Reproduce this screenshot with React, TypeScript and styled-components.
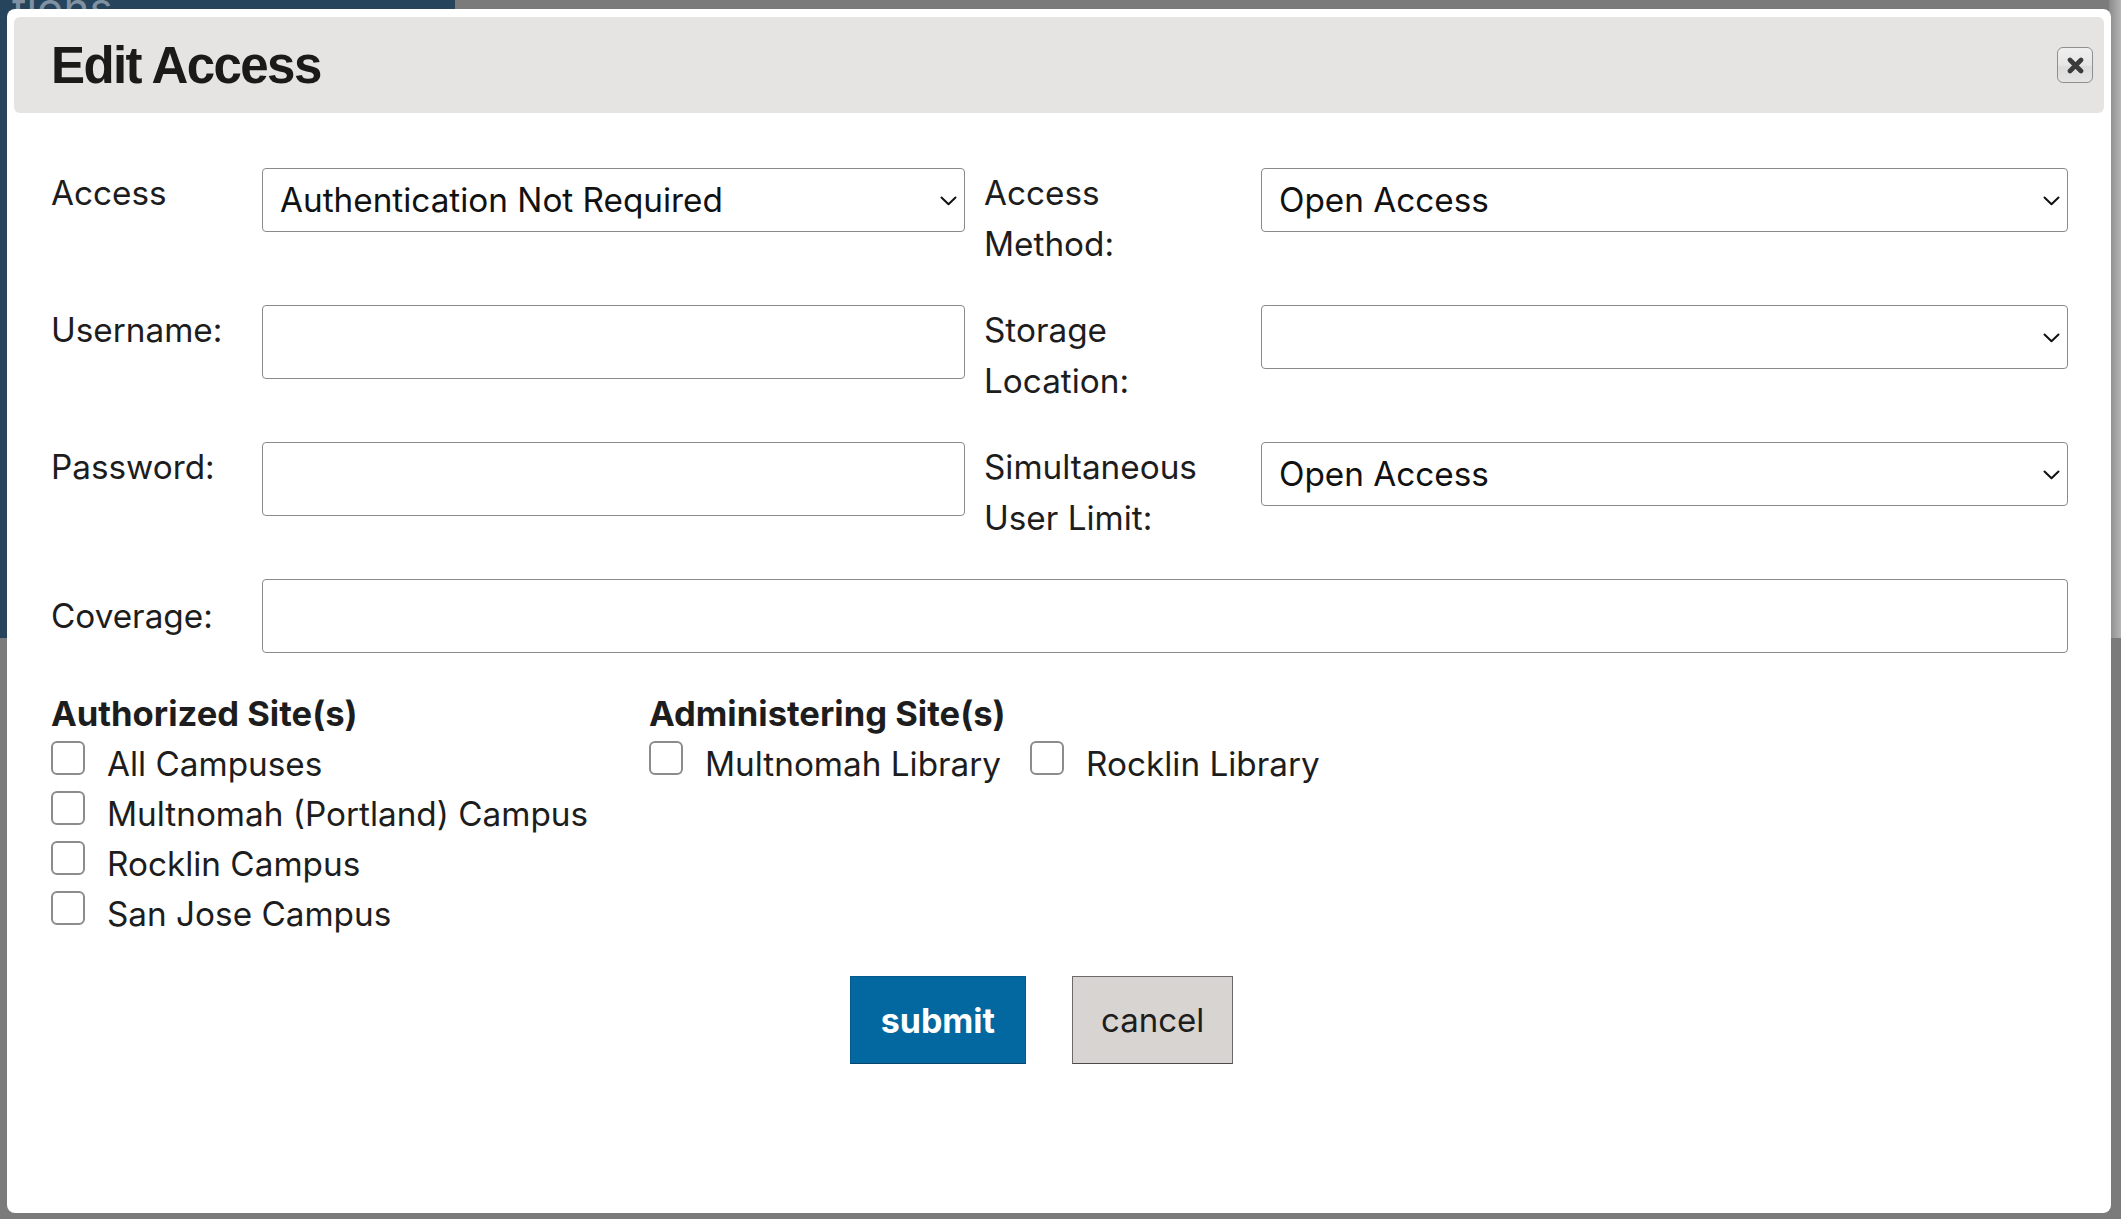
import React from 'react';
import styled, { createGlobalStyle } from 'styled-components';

const GlobalStyle = createGlobalStyle`
  html, body { margin: 0; padding: 0; }
  body {
    width: 2121px;
    height: 1219px;
    overflow: hidden;
    background: #7b7b7b;
    font-family: Inter, "Noto Sans", sans-serif;
  }
  * { box-sizing: border-box; }
`;

const Page = styled.div`
  position: relative;
  width: 2121px;
  height: 1219px;
  display: grid;
  grid-template-columns: 455px 1fr 12px;
  grid-template-rows: 638px 1fr;
  background: #7b7b7b;
`;

const Sidebar = styled.nav`
  background: #26445c;
  overflow: hidden;
  display: flex;
  flex-direction: column;
  align-items: flex-start;
  color: rgba(190, 200, 210, 0.6);
  font-size: 44px;
  line-height: 1;
`;

const SideItem = styled.span`
  margin-top: -14px;
  white-space: nowrap;
  padding-left: 12px;
`;

const RightShade = styled.div`
  grid-column: 3;
  grid-row: 1;
  background: linear-gradient(90deg, #8a8a8a, #b5b5b5);
`;

const Dialog = styled.div`
  position: absolute;
  left: 7px;
  top: 9px;
  width: 2104px;
  height: 1204px;
  background: #fff;
  border-radius: 8px;
  padding: 8px 7px;
  display: flex;
  flex-direction: column;
  color: #1d1d1d;
`;

const Header = styled.div`
  height: 96px;
  background: #e5e4e2;
  border-radius: 6px;
  display: flex;
  align-items: center;
  justify-content: space-between;
  padding: 0 11px 0 37px;
`;

const Title = styled.h1`
  margin: 0;
  font-family: "Liberation Sans", Arial, sans-serif;
  font-weight: 700;
  font-size: 51px;
  letter-spacing: -1.6px;
  line-height: 1;
  color: #1c1a17;
`;

const CloseButton = styled.button`
  width: 36px;
  height: 36px;
  padding: 0;
  border: 1px solid #8f8f8f;
  border-radius: 6px;
  background: linear-gradient(#efefef, #e6e6e6 50%, #dcdcdc 55%, #e4e4e4);
  display: grid;
  place-items: center;
  cursor: pointer;
`;

const Body = styled.div`
  padding: 55px 36px 0 37px;
  display: flex;
  flex-direction: column;
`;

const FormGrid = styled.div`
  display: grid;
  grid-template-columns: 192px 703px 258px 807px;
  column-gap: 19px;
  row-gap: 35px;
  align-items: start;
`;

const Label = styled.label<{ $center?: boolean }>`
  font-size: 33.3px;
  line-height: 51px;
  color: #1d1d1d;
  align-self: ${(p) => (p.$center ? 'center' : 'start')};
`;

const SelectWrap = styled.div`
  position: relative;
  height: 64px;
`;

const Select = styled.select`
  width: 100%;
  height: 64px;
  appearance: none;
  -webkit-appearance: none;
  border: 1px solid #8a8a8a;
  border-radius: 4px;
  background: #fff;
  padding: 0 44px 0 17px;
  font-family: Inter, "Noto Sans", sans-serif;
  font-size: 33.3px;
  color: #111;
  outline: none;
`;

const Chevron = styled.svg`
  position: absolute;
  right: 8px;
  top: 50%;
  transform: translateY(-40%);
  pointer-events: none;
`;

const TextInput = styled.input<{ $span?: boolean }>`
  height: 74px;
  width: 100%;
  border: 1px solid #8a8a8a;
  border-radius: 4px;
  background: #fff;
  font-family: Inter, "Noto Sans", sans-serif;
  font-size: 33px;
  padding: 0 18px;
  outline: none;
  ${(p) => (p.$span ? 'grid-column: 2 / 5;' : '')}
`;

const Sites = styled.div`
  margin-top: 35px;
  display: grid;
  grid-template-columns: 598px auto;
`;

const SiteGroup = styled.div`
  display: flex;
  flex-direction: column;
`;

const SiteHeading = styled.h3`
  margin: 0;
  font-size: 34.6px;
  font-weight: 700;
  line-height: 51px;
  color: #1d1d1d;
`;

const InlineChecks = styled.div`
  display: flex;
  gap: 29px;
`;

const CheckRow = styled.label`
  display: flex;
  align-items: flex-start;
  height: 50px;
  font-size: 33.3px;
  line-height: 50px;
  color: #1d1d1d;
  white-space: nowrap;
`;

const Checkbox = styled.input.attrs({ type: 'checkbox' })`
  appearance: none;
  -webkit-appearance: none;
  width: 34px;
  height: 34px;
  margin: 2px 22px 0 0;
  border: 2px solid #8c8c8c;
  border-radius: 6px;
  background: #fff;
  flex: none;
`;

const Actions = styled.div`
  margin-top: 37px;
  display: flex;
  justify-content: center;
  gap: 46px;
  padding-right: 36px;
`;

const Button = styled.button<{ $primary?: boolean }>`
  height: 88px;
  padding: 0 ${(p) => (p.$primary ? 30 : 28)}px;
  font-family: Inter, "Noto Sans", sans-serif;
  font-size: ${(p) => (p.$primary ? 34 : 33)}px;
  font-weight: ${(p) => (p.$primary ? 700 : 400)};
  color: ${(p) => (p.$primary ? '#fff' : '#1d1d1d')};
  background: ${(p) => (p.$primary ? '#0468a0' : '#d8d4d1')};
  border: 1px solid ${(p) => (p.$primary ? '#045a8a' : '#6a6a6a')};
  border-bottom-color: ${(p) => (p.$primary ? '#02466d' : '#4a4a4a')};
  border-radius: 0;
  cursor: pointer;
`;

const ChevronIcon = () => (
  <Chevron width="17" height="10" viewBox="0 0 17 10">
    <path d="M1.5 1.5 L8.5 8.3 L15.5 1.5" fill="none" stroke="#111" strokeWidth="2" strokeLinecap="round" strokeLinejoin="round" />
  </Chevron>
);

const SelectField: React.FC<{ value: string; options: string[] }> = ({ value, options }) => (
  <SelectWrap>
    <Select defaultValue={value}>
      {options.map((o) => (
        <option key={o} value={o}>
          {o}
        </option>
      ))}
    </Select>
    <ChevronIcon />
  </SelectWrap>
);

const Check: React.FC<{ label: string }> = ({ label }) => (
  <CheckRow>
    <Checkbox />
    {label}
  </CheckRow>
);

export default function App() {
  return (
    <>
      <GlobalStyle />
      <Page>
        <Sidebar>
          <SideItem>tions</SideItem>
        </Sidebar>
        <div />
        <RightShade />
      </Page>
      <Dialog role="dialog" aria-label="Edit Access">
        <Header>
          <Title>Edit Access</Title>
          <CloseButton aria-label="close">
            <svg width="17" height="17" viewBox="0 0 17 17">
              <path d="M3 3 L14 14 M14 3 L3 14" stroke="#3b3b3b" strokeWidth="4.6" strokeLinecap="round" />
            </svg>
          </CloseButton>
        </Header>
        <Body>
          <FormGrid>
            <Label>Access</Label>
            <SelectField value="Authentication Not Required" options={['Authentication Not Required', 'Authentication Required']} />
            <Label>
              Access
              <br />
              Method:
            </Label>
            <SelectField value="Open Access" options={['Open Access', 'IP Address', 'Username']} />

            <Label>Username:</Label>
            <TextInput type="text" />
            <Label>
              Storage
              <br />
              Location:
            </Label>
            <SelectField value="" options={['', 'Online', 'Local']} />

            <Label>Password:</Label>
            <TextInput type="text" />
            <Label>
              Simultaneous
              <br />
              User Limit:
            </Label>
            <SelectField value="Open Access" options={['Open Access', '1', '2', '3']} />

            <Label $center>Coverage:</Label>
            <TextInput type="text" $span />
          </FormGrid>

          <Sites>
            <SiteGroup>
              <SiteHeading>Authorized Site(s)</SiteHeading>
              <Check label="All Campuses" />
              <Check label="Multnomah (Portland) Campus" />
              <Check label="Rocklin Campus" />
              <Check label="San Jose Campus" />
            </SiteGroup>
            <SiteGroup>
              <SiteHeading>Administering Site(s)</SiteHeading>
              <InlineChecks>
                <Check label="Multnomah Library" />
                <Check label="Rocklin Library" />
              </InlineChecks>
            </SiteGroup>
          </Sites>

          <Actions>
            <Button $primary>submit</Button>
            <Button>cancel</Button>
          </Actions>
        </Body>
      </Dialog>
    </>
  );
}
